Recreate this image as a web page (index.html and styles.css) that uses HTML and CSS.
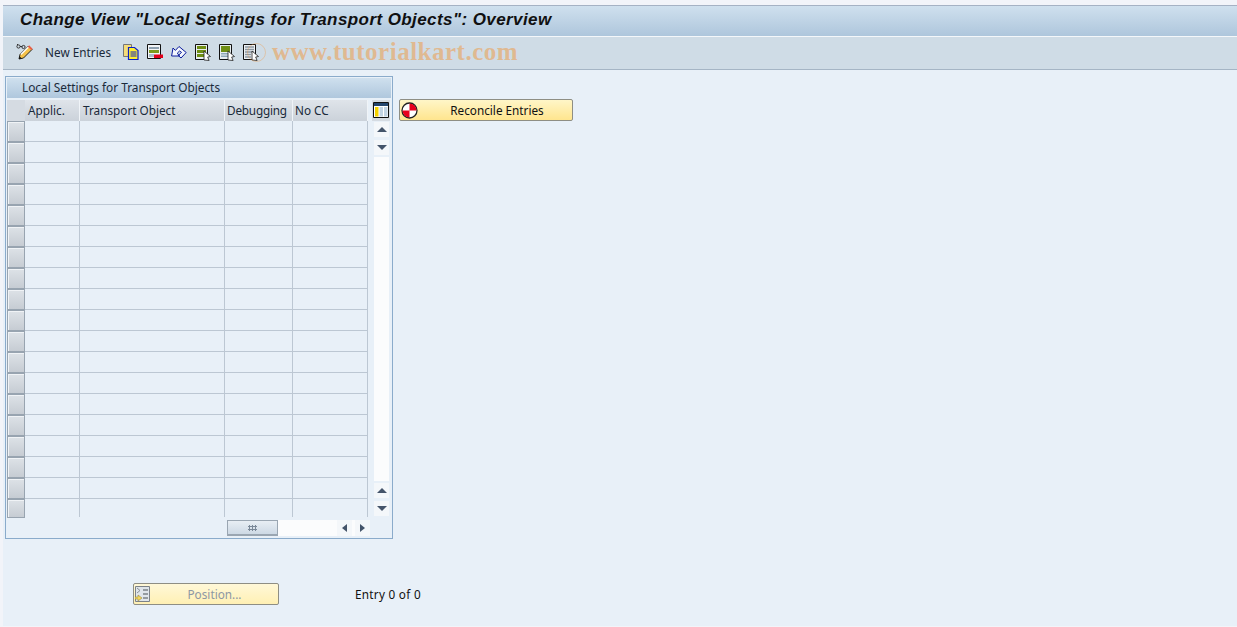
FILE: index.html
```html
<!DOCTYPE html>
<html lang="en">
<head>
<meta charset="utf-8">
<title>Change View</title>
<link rel="stylesheet" href="styles.css">
</head>
<body>
<div class="shell">
  <header class="titlebar"><h1>Change View "Local Settings for Transport Objects": Overview</h1></header>
  <nav class="toolbar">
    <svg class="icon pencil" width="18" height="18" viewBox="0 0 18 18"><circle cx="2.500" cy="3.500" r="1.600" fill="none" stroke="#333"/><circle cx="7.500" cy="4" r="1.600" fill="none" stroke="#333"/><path d="M4 3.500h2M1 2l1-1" stroke="#333" fill="none"/><path d="M3 16l1-4.500L12.500 3l3.500 3.500L7.500 15z" fill="#f5c24a" stroke="#222" stroke-width="1"/><path d="M5 11.500l7.500-7.500" stroke="#fff" stroke-width="1.200"/><path d="M12.500 3l3.500 3.500" stroke="#e8604a" stroke-width="1.800"/><path d="M3 16l.6-2.700 2.100 2.100z" fill="#111"/></svg>
    <span class="tool-label">New Entries</span>
    <svg class="icon" width="16" height="16" viewBox="0 0 16 16"><path d="M.500.500h8v12h-8z" fill="#f4dc7a" stroke="#777"/><path d="M5.500 3.500h6l3.500 3v9H5.500z" fill="#ffee30" stroke="#0a1ec8" stroke-width="1.200"/><path d="M7.500 8h6M7.500 10h6M7.500 12h6" stroke="#0a1ec8"/></svg>
    <svg class="icon" width="16" height="16" viewBox="0 0 16 16"><path d="M.500.500h13v14H.500z" fill="#f2f4f6" stroke="#111"/><path d="M2 3h10v2H2z" fill="#8ea0b0"/><path d="M2 6h10v3H2z" fill="#7d9a1c"/><path d="M2 10h5v3H2z" fill="#a9b9c6"/><path d="M7 10.500h9V14H7z" fill="#e0001a"/></svg>
    <svg class="icon" width="16" height="16" viewBox="0 0 16 16"><path d="M.600 12l1.400-8 2.400 2.400L8 2.500l7.200 6-5.200 5.500-2.700-2.500 3.200-3.200L8.500 7 6.300 9.200 8.500 12z" fill="#f4f7fd" stroke="#0a1a9c" stroke-width="1" stroke-linejoin="round"/></svg>
    <svg class="icon" width="16" height="17" viewBox="0 0 16 17"><path d="M.500.500h12v15H.500z" fill="#e8eef0" stroke="#111"/><path d="M2 2h9v3H2zM2 6h9v3H2zM2 10h9v3H2z" fill="#6f8e14"/><path d="M9 7l6.500 5.500-2.800.5 1.400 3.500-5.100-.5z" fill="#fff" stroke="#222" stroke-width=".8"/></svg>
    <svg class="icon" width="16" height="17" viewBox="0 0 16 17"><path d="M.500.500h12v15H.500z" fill="#e8eef0" stroke="#111"/><path d="M2 2h9v6H2z" fill="#6f8e14"/><path d="M2 9h9v1.500H2zM2 11.500h9V13H2z" fill="#8ea8b8"/><path d="M9 7l6.500 5.500-2.800.5 1.400 3.500-5.100-.5z" fill="#fff" stroke="#222" stroke-width=".8"/></svg>
    <svg class="icon" width="16" height="17" viewBox="0 0 16 17"><path d="M.500.500h12v15H.500z" fill="#eef1f3" stroke="#111"/><path d="M2 3h9M2 5.500h9M2 8h9M2 10.500h6M2 13h6" stroke="#8a97a2" stroke-width="1.300"/><path d="M9 7l6.500 5.500-2.800.5 1.400 3.500-5.100-.5z" fill="#fff" stroke="#222" stroke-width=".8"/></svg>
  </nav>
  <div class="watermark"><i class="wm-ring"></i><span>www.tutorialkart.com</span></div>
  <main class="content">
    <div class="upper">
      <section class="panel">
        <h2 class="panel-title">Local Settings for Transport Objects</h2>
        <div class="table-area">
          <div class="table-main">
            <div class="row head">
              <div class="sel"></div>
              <div class="cell c1">Applic.</div><div class="cell c2">Transport Object</div><div class="cell c3">Debugging</div><div class="cell c4">No CC</div>
            </div>
            <div class="row"><div class="sel"></div><div class="cell c1"></div><div class="cell c2"></div><div class="cell c3"></div><div class="cell c4"></div></div>
            <div class="row"><div class="sel"></div><div class="cell c1"></div><div class="cell c2"></div><div class="cell c3"></div><div class="cell c4"></div></div>
            <div class="row"><div class="sel"></div><div class="cell c1"></div><div class="cell c2"></div><div class="cell c3"></div><div class="cell c4"></div></div>
            <div class="row"><div class="sel"></div><div class="cell c1"></div><div class="cell c2"></div><div class="cell c3"></div><div class="cell c4"></div></div>
            <div class="row"><div class="sel"></div><div class="cell c1"></div><div class="cell c2"></div><div class="cell c3"></div><div class="cell c4"></div></div>
            <div class="row"><div class="sel"></div><div class="cell c1"></div><div class="cell c2"></div><div class="cell c3"></div><div class="cell c4"></div></div>
            <div class="row"><div class="sel"></div><div class="cell c1"></div><div class="cell c2"></div><div class="cell c3"></div><div class="cell c4"></div></div>
            <div class="row"><div class="sel"></div><div class="cell c1"></div><div class="cell c2"></div><div class="cell c3"></div><div class="cell c4"></div></div>
            <div class="row"><div class="sel"></div><div class="cell c1"></div><div class="cell c2"></div><div class="cell c3"></div><div class="cell c4"></div></div>
            <div class="row"><div class="sel"></div><div class="cell c1"></div><div class="cell c2"></div><div class="cell c3"></div><div class="cell c4"></div></div>
            <div class="row"><div class="sel"></div><div class="cell c1"></div><div class="cell c2"></div><div class="cell c3"></div><div class="cell c4"></div></div>
            <div class="row"><div class="sel"></div><div class="cell c1"></div><div class="cell c2"></div><div class="cell c3"></div><div class="cell c4"></div></div>
            <div class="row"><div class="sel"></div><div class="cell c1"></div><div class="cell c2"></div><div class="cell c3"></div><div class="cell c4"></div></div>
            <div class="row"><div class="sel"></div><div class="cell c1"></div><div class="cell c2"></div><div class="cell c3"></div><div class="cell c4"></div></div>
            <div class="row"><div class="sel"></div><div class="cell c1"></div><div class="cell c2"></div><div class="cell c3"></div><div class="cell c4"></div></div>
            <div class="row"><div class="sel"></div><div class="cell c1"></div><div class="cell c2"></div><div class="cell c3"></div><div class="cell c4"></div></div>
            <div class="row"><div class="sel"></div><div class="cell c1"></div><div class="cell c2"></div><div class="cell c3"></div><div class="cell c4"></div></div>
            <div class="row"><div class="sel"></div><div class="cell c1"></div><div class="cell c2"></div><div class="cell c3"></div><div class="cell c4"></div></div>
            <div class="row last"><div class="sel"></div><div class="cell c1"></div><div class="cell c2"></div><div class="cell c3"></div><div class="cell c4"></div></div>
            <div class="hscroll">
              <div class="thumb"><i></i></div>
              <div class="track"></div>
              <div class="sbtn"><b class="tri left"></b></div>
              <div class="sbtn"><b class="tri right"></b></div>
            </div>
          </div>
          <div class="vscroll">
            <div class="config">
              <svg width="16" height="16" viewBox="0 0 16 16"><path d="M.500.500h15v15H.500z" fill="#fff" stroke="#111"/><path d="M1 1h14v3H1z" fill="#23456e"/><path d="M2 5h3.500v9.500H2z" fill="#f6d200"/><path d="M6.500 5H10v9.500H6.500zM11 5h3.500v9.500H11z" fill="#c2d4e4"/></svg>
            </div>
            <div class="vbtn first"><b class="tri up"></b></div>
            <div class="vbtn"><b class="tri down"></b></div>
            <div class="vtrack"></div>
            <div class="vbtn after"><b class="tri up"></b></div>
            <div class="vbtn"><b class="tri down"></b></div>
          </div>
        </div>
      </section>
      <button class="btn reconcile" type="button">
        <svg width="17" height="17" viewBox="0 0 17 17"><circle cx="8.500" cy="8.500" r="7.500" fill="#fff" stroke="#222" stroke-width="1.300"/><path d="M8.500 8.500V1.500a7 7 0 0 1 7 7zM8.500 8.500v7a7 7 0 0 1-7-7z" fill="#e8001c"/></svg>
        <span>Reconcile Entries</span>
      </button>
    </div>
    <div class="lower">
      <button class="btn position" type="button">
        <svg width="16" height="16" viewBox="0 0 16 16"><path d="M.500.500h14v15H.500z" fill="#dfe5ea" stroke="#7c8288"/><path d="M8 4h5M8 8h5M8 12h5" stroke="#7c8288" stroke-width="1.300"/><path d="M2 2l3 2.500L2 7" fill="none" stroke="#8a9099"/><path d="M0 11h3V9l4 3-4 3v-2H0z" fill="#f2d660" stroke="#9a8a3a" stroke-width=".6"/></svg>
        <span>Position...</span>
      </button>
      <span class="entry">Entry 0 of 0</span>
    </div>
  </main>
</div>
</body>
</html>
```
FILE: styles.css
```css
* { box-sizing: border-box; }
html, body { margin: 0; height: 100%; overflow: hidden; }
body {
  background: #f2f4f9;
  color: #111;
  font-family: Tahoma, "Noto Sans", "Open Sans", sans-serif;
  font-size: 11.750px;
}
.shell {
  position: relative;
  margin-left: 3px;
  padding: 5px 0 1px;
  height: 627px;
  display: flex;
  flex-direction: column;
}
.titlebar {
  height: 32px;
  border-top: 1px solid #a5b2c4;
  border-bottom: 1px solid #f4f7fa;
  padding: 0 0 2px 17px;
  background: linear-gradient(#cfe0ee, #aec6dc);
  display: flex;
  align-items: center;
}
.titlebar h1 {
  margin: 0;
  font: italic bold 17px "Liberation Sans", sans-serif;
  letter-spacing: .42px;
  color: #101010;
  white-space: nowrap;
}
.toolbar {
  height: 33px;
  background: #cfdce6;
  border-bottom: 1px solid #a5b5c5;
  display: flex;
  align-items: center;
  padding: 0 0 2px 13px;
}
.icon { flex: none; margin-right: 8px; }
.pencil { margin-right: 11px; }
.tool-label { margin-right: 12px; white-space: nowrap; color: #1a2a3a; letter-spacing: .03px; }
.watermark {
  position: absolute;
  left: 269px;
  top: 38px;
  font: bold 25px "Liberation Serif", serif;
  color: rgba(240, 150, 60, .5);
  letter-spacing: .5px;
  white-space: nowrap;
}
.wm-ring {
  position: absolute;
  left: -25px;
  top: 5px;
  width: 19px;
  height: 19px;
  border: 1px solid rgba(240, 150, 60, .35);
  border-radius: 50%;
}
.content {
  flex: 1;
  background: #e8f0f8;
  padding: 6px 0 0 2px;
  display: flex;
  flex-direction: column;
}
.upper { display: flex; align-items: flex-start; }
.panel {
  width: 388px;
  height: 463px;
  border: 1px solid #8aabcb;
  padding: 1px;
  flex: none;
  display: flex;
  flex-direction: column;
}
.panel-title {
  margin: 0;
  height: 20px;
  padding-left: 15px;
  font-size: 11.850px;
  font-weight: 400;
  line-height: 19px;
  color: #1a2a3a;
  background: linear-gradient(#cfe0ee, #afc7dd);
}
.table-area {
  margin-top: 2px;
  display: flex;
  flex: 1;
}
.table-main { width: 363px; flex: none; }
.row { display: flex; height: 21px; }
.sel {
  width: 18px;
  flex: none;
  border: 1px solid #98a4b0;
  background: linear-gradient(#dde2e7, #c6ccd3);
  box-shadow: inset 1px 1px 0 #f0f3f6;
}
.head .sel { border: 0; box-shadow: none; background: #d5dbe2; }
.cell {
  border-right: 1px solid #bcc7d3;
  border-bottom: 1px solid #bcc7d3;
  padding-left: 3px;
  overflow: hidden;
  white-space: nowrap;
}
.head .cell {
  background: linear-gradient(#dfe4ea, #cbd2da);
  border-right: 1px solid #f0f4f8;
  border-bottom: 0;
  line-height: 21px;
  color: #1a2a3a;
}
.c1 { width: 55px; padding-left: 3px; }
.c2 { width: 145px; }
.c3 { width: 68px; padding-left: 2px; letter-spacing: -.2px; }
.c4 { width: 75px; padding-left: 2px; }
.last .cell { height: 18px; border-bottom: 0; }
.last { height: 19px; }
.hscroll {
  display: flex;
  height: 16px;
  margin: 2px 0 0 220px;
  width: 143px;
  background: #fbfcfd;
}
.thumb {
  width: 51px;
  height: 16px;
  border: 1px solid #9aa6b2;
  border-bottom-width: 2px;
  background: linear-gradient(#e8eef4, #cdd9e5);
  display: flex;
  align-items: center;
  justify-content: center;
}
.thumb i {
  width: 9px;
  height: 6px;
  background: radial-gradient(circle, #7a8898 1px, transparent 1.200px) 0 0 / 3px 3px;
}
.track { width: 57px; }
.sbtn {
  width: 15px;
  margin-left: 3px;
  background: #f4f7fa;
  display: flex;
  align-items: center;
  justify-content: center;
}
.track + .sbtn { margin-left: 2px; }
.tri { width: 0; height: 0; display: block; border-style: solid; border-color: transparent; }
.tri.left { border-width: 4px 5px 4px 0; border-right-color: #44546a; }
.tri.right { border-width: 4px 0 4px 5px; border-left-color: #44546a; }
.tri.up { border-width: 0 5px 5px; border-bottom-color: #44546a; }
.tri.down { border-width: 5px 5px 0; border-top-color: #44546a; }
.vscroll {
  width: 19px;
  padding-left: 4px;
  display: flex;
  flex-direction: column;
  align-items: stretch;
}
.config {
  height: 21px;
  margin: 0 -1px 0 -2px;
  padding-bottom: 1px;
  background: #d5dbe2;
  display: flex;
  align-items: center;
  justify-content: center;
}
.vbtn {
  height: 15px;
  margin-top: 3px;
  background: #f4f7fa;
  display: flex;
  align-items: center;
  justify-content: center;
}
.vbtn.first { margin-top: 1px; }
.vtrack { height: 324px; margin-top: 2px; background: #fbfcfd; }
.vbtn.after { margin-top: 2px; }
.btn {
  display: flex;
  align-items: center;
  padding: 0 0 0 1px;
  border: 1px solid #8e8e84;
  border-radius: 2px;
  font: inherit;
  color: #111;
  background: linear-gradient(#fff6c8, #ffe58e);
}
.btn span { flex: 1; text-align: center; }
.reconcile { width: 174px; height: 22px; margin: 23px 0 0 6px; }
.reconcile span { padding-left: 4px; }
.lower {
  display: flex;
  align-items: center;
  margin-top: 44px;
  padding-left: 128px;
}
.position {
  width: 146px;
  height: 22px;
  background: linear-gradient(#fff8d8, #fff0b4);
  color: #8d97a3;
}
.position span { padding-left: 0; }
.entry { margin-left: 76px; color: #111; letter-spacing: .27px; }
```
